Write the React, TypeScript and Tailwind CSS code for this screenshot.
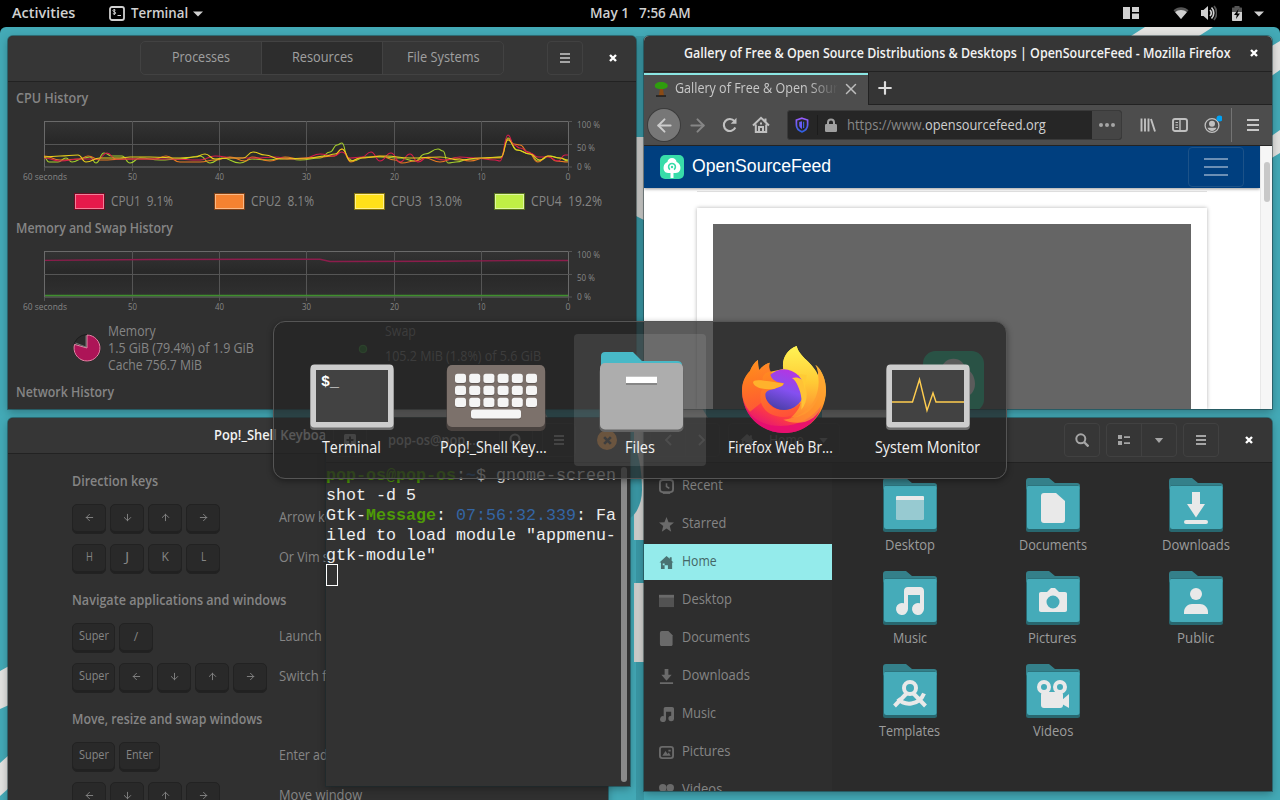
import React, { useLayoutEffect, useRef, useState } from "react";
import { ArrowLeft, ArrowDown, ArrowUp, ArrowRight, X, Plus } from "lucide-react";

/* Text squeezed or stretched horizontally so that it takes exactly `w` pixels. */
function Fit({ w, className = "", children }: { w: number; className?: string; children: React.ReactNode }) {
  const ref = useRef<HTMLSpanElement>(null);
  const [scale, setScale] = useState(1);
  useLayoutEffect(() => {
    if (ref.current) setScale(w / ref.current.offsetWidth);
  }, [w]);
  return (
    <span className={`block shrink-0 whitespace-nowrap ${className}`} style={{ width: w }}>
      <span ref={ref} className="inline-block origin-left" style={{ transform: `translateY(-1px) scaleX(${scale})` }}>
        {children}
      </span>
    </span>
  );
}

type Pt = [number, number];

function smooth(p: Pt[]) {
  let d = `M${p[0][0]} ${p[0][1]}`;
  for (let i = 1; i < p.length; i++) {
    const mx = (p[i - 1][0] + p[i][0]) / 2;
    d += ` C${mx} ${p[i - 1][1]} ${mx} ${p[i][1]} ${p[i][0]} ${p[i][1]}`;
  }
  return d;
}

const green: Pt[] = [[44,157],[49,162],[58,162],[66,158],[72,162],[84,158],[90,157],[96,163],[104,153],[112,156],[122,156],[130,163],[140,158],[160,160],[180,159],[200,156],[210,163],[222,158],[240,163],[252,159],[268,160],[285,158],[300,160],[320,158],[330,152],[337,145],[342,143],[348,158],[353,161],[365,157],[380,157],[400,158],[415,161],[425,154],[438,149],[443,151],[448,163],[456,162],[470,159],[485,158],[501,157],[508,138],[517,150],[530,154],[538,161],[550,156],[560,158],[568,161]];
const yellow: Pt[] = [[44,157],[60,156],[78,155],[86,162],[100,158],[120,158],[130,157],[150,157],[180,158],[195,157],[205,154],[215,159],[230,158],[243,158],[253,152],[265,155],[280,159],[310,158],[325,156],[335,154],[342,149],[351,161],[360,158],[385,156],[410,158],[440,157],[460,160],[480,158],[501,157],[508,140],[517,150],[530,154],[540,160],[548,156],[560,158],[568,160]];
const orange: Pt[] = [[44,156],[60,160],[80,159],[88,156],[100,160],[130,159],[155,159],[166,156],[180,162],[200,162],[215,160],[230,157],[245,161],[252,157],[270,161],[285,157],[300,159],[320,157],[334,156],[342,149],[351,162],[360,158],[380,156],[395,160],[402,163],[415,161],[425,158],[440,162],[455,158],[470,161],[485,158],[501,158],[508,139],[514,144],[520,145],[528,152],[538,162],[548,156],[556,161],[568,162]];
const red: Pt[] = [[44,158],[60,161],[80,159],[98,159],[107,153],[116,159],[140,159],[170,159],[200,160],[215,156],[235,158],[255,158],[275,157],[290,159],[305,158],[320,154],[334,156],[342,152],[350,158],[362,157],[371,152],[380,161],[391,153],[400,162],[410,154],[418,162],[428,157],[445,160],[460,157],[475,158],[495,160],[500,161],[508,135],[514,145],[520,148],[530,153],[538,157],[548,157],[558,161],[565,155],[568,155]];

function ChartFrame({ id, children }: { id: string; children: React.ReactNode }) {
  const ticks: [number, string, number][] = [[132.5, "50", 9], [219.5, "40", 9], [306.5, "30", 9], [394.5, "20", 9], [481.5, "10", 8], [568, "0", 5]];
  return (
    <svg viewBox="8 114 628 72" className="h-[72px] w-[628px] shrink-0">
      <defs>
        <linearGradient id={id} x1="0" y1="0" x2="0" y2="1">
          <stop offset="0" stopColor="#333" />
          <stop offset="0.45" stopColor="#282828" />
          <stop offset="1" stopColor="#303030" />
        </linearGradient>
      </defs>
      <rect x="44.5" y="121.5" width="524" height="45.5" fill={`url(#${id})`} stroke="#6a6a6a" />
      <path d="M44.5 144.5H572M568 121.5h4M568 167h4M44.5 167v4M568.5 167v4M132.5 121v50M219.5 121v50M306.5 121v50M394.5 121v50M481.5 121v50" stroke="#555" fill="none" />
      {children}
      <g fill="#868686" fontSize="9" fontFamily='"Open Sans", sans-serif'>
        <text x="23" y="180" textLength="44" lengthAdjust="spacingAndGlyphs">60 seconds</text>
        {ticks.map(([x, t, w]) => (
          <text key={t} x={x} y="180" textAnchor="middle" textLength={w} lengthAdjust="spacingAndGlyphs">{t}</text>
        ))}
        <text x="577" y="128" textLength="23" lengthAdjust="spacingAndGlyphs">100 %</text>
        <text x="577" y="151" textLength="18" lengthAdjust="spacingAndGlyphs">50 %</text>
        <text x="577" y="170" textLength="14" lengthAdjust="spacingAndGlyphs">0 %</text>
      </g>
    </svg>
  );
}

function MenuBars({ className = "" }: { className?: string }) {
  return (
    <svg viewBox="0 0 10 12" className={`h-3 w-[10px] ${className}`}>
      <path d="M0 2h10M0 6h10M0 10h10" stroke="currentColor" strokeWidth="1.9" />
    </svg>
  );
}

function CloseX({ className = "" }: { className?: string }) {
  return (
    <svg viewBox="0 0 8 8" className={`size-2 ${className}`}>
      <path d="M1 1l6 6M7 1l-6 6" stroke="currentColor" strokeWidth="2.4" />
    </svg>
  );
}

function TopBar() {
  return (
    <header className="flex h-[27px] w-full shrink-0 items-center bg-black pl-3 text-[14px] font-semibold leading-[26px] text-[#d0d0d0]">
      <Fit w={63}>Activities</Fit>
      <svg viewBox="0 0 16 16" className="ml-[34px] size-4 -translate-y-px">
        <rect x="1" y="2" width="14" height="13" rx="2" fill="none" stroke="#d0d0d0" strokeWidth="1.8" />
        <path d="M6.5 5.200c-1-.900-2.600-.600-2.600.400 0 1.400 2.800.900 2.800 2.500 0 1-1.700 1.300-2.900.300M5.300 4v6M8.500 10.500h3.500" fill="none" stroke="#d0d0d0" strokeWidth="1" />
      </svg>
      <Fit w={57} className="ml-[6px]">Terminal</Fit>
      <svg viewBox="0 0 10 6" className="ml-[5px] h-[6px] w-[10px]"><path d="M0 .5h10L5 5.500z" fill="#d0d0d0" /></svg>
      <Fit w={39} className="ml-[387px]">May 1</Fit>
      <Fit w={52} className="ml-[10px]">7:56 AM</Fit>
      <svg viewBox="0 0 16 12" className="ml-[432px] h-3 w-4 -translate-y-px" fill="#d0d0d0"><path d="M0 0h7v12H0zM9 0h7v5H9zM9 6.500h7V12H9z" /></svg>
      <svg viewBox="0 0 16 14" className="ml-[34px] h-[14px] w-4 -translate-y-px">
        <path d="M8 13L.5 4.200C4.500.300 11.500.300 15.500 4.200z" fill="#555" />
        <path d="M8 13L2.200 6.200c3-2.900 8.600-2.900 11.600 0z" fill="#d0d0d0" />
      </svg>
      <svg viewBox="0 0 16 16" className="ml-3 size-4 -translate-y-px" fill="none" strokeWidth="1.700">
        <path d="M0 5h2.500L7 1v14L2.500 11H0z" fill="#d0d0d0" />
        <path d="M9 5c1.500 1.700 1.500 4.300 0 6M10.500 2.500c3 3 3 8 0 11" stroke="#d0d0d0" />
        <path d="M13 1c3.500 4 3.500 10 0 14" stroke="#555" />
      </svg>
      <svg viewBox="0 0 12 16" className="ml-[14px] h-4 w-3 -translate-y-px">
        <path d="M3.500 1h5v1.500H10c.8 0 1 .4 1 1V7H1V3.500c0-.6.200-1 1-1h1.500z" fill="#555" />
        <path d="M1 7h10v8c0 .600-.300 1-1 1H2c-.7 0-1-.4-1-1z" fill="#d0d0d0" />
        <path d="M7.500 4L3 10h2.700L5 14l4-5.500H6.400z" fill="#000" />
      </svg>
      <svg viewBox="0 0 10 6" className="ml-[11px] h-[6px] w-[10px]"><path d="M0 .5h10L5 5.500z" fill="#d0d0d0" /></svg>
    </header>
  );
}

function Wallpaper() {
  return (
    <svg viewBox="0 0 1280 773" className="absolute inset-0 h-[773px] w-[1280px]">
      <rect width="1280" height="773" fill="#000" />
      <rect width="1280" height="790" rx="6" fill="#43a9b6" />
      <g transform="translate(0 -27)">
        <rect x="636" y="36" width="8" height="764" fill="#3a98a5" />
        <g fill="#e2e2e0">
          <path d="M1145 27h68l-14 9h-68zM1270 47l10-6v29l-10 7zM1270 137l10-7v23l-10 6z" />
          <path d="M0 671l9-5v39l-9 4zM0 763l9-8v33l-9 8z" />
          <path d="M388 408h154l6 10H394zM636 408h66l6 10h-72zM822 408h110v10H822z" />
        </g>
        <g fill="#cfcfcd">
          <path d="M634 137h12v84l-12-6zM634 418h12v122h-12zM634 583h12v79h-12z" />
        </g>
        <path d="M630 440c7 3 12 28 12 50 0 12-5 24-12 28z" fill="#3a98a5" />
      </g>
    </svg>
  );
}

const winCls = "absolute flex flex-col overflow-hidden shadow-[0_0_0_1px_rgba(25,45,48,0.45),0_3px_8px_rgba(0,0,0,0.3)]";
const headCls = "flex shrink-0 items-center border-b border-[#222] bg-[#363636]";
const btnCls = "flex items-center justify-center rounded-[4px] border border-[#414141] text-[#a5a5a5]";

function Legend({ border, fill, inner, label, value, w, className }: { border: string; fill: string; inner: string; label: string; value: string; w: number; className: string }) {
  return (
    <div className={`flex items-center ${className}`}>
      <svg viewBox="0 0 31 17" className="h-[17px] w-[31px]">
        <rect x=".5" y=".5" width="30" height="16" fill={fill} stroke={border} />
        <rect x="1.500" y="1.500" width="28" height="14" fill="none" stroke={inner} />
      </svg>
      <Fit w={w} className="ml-[6px]">{label}&nbsp; {value}</Fit>
    </div>
  );
}

function SystemMonitor() {
  return (
    <section className={`${winCls} left-[8px] top-[9px] h-[373px] w-[628px] rounded-t-[5px] bg-[#303030] text-[14px] text-[#858585]`}>
      <div className={`${headCls} h-[46px] text-[#a0a0a0]`}>
        <div className="ml-[132px] flex h-[34px] w-[364px] -translate-y-[1px] overflow-hidden rounded-[5px] border border-[#424242]">
          <div className="flex flex-1 items-center justify-center"><Fit w={58}>Processes</Fit></div>
          <div className="flex flex-1 items-center justify-center border-x border-[#424242] bg-[#2d2d2d]"><Fit w={61}>Resources</Fit></div>
          <div className="flex flex-1 items-center justify-center"><Fit w={73}>File Systems</Fit></div>
        </div>
        <div className={`${btnCls} ml-[43px] h-[34px] w-9 -translate-y-[1px]`}><MenuBars /></div>
        <CloseX className="ml-[26px] -translate-y-[1px] text-white" />
      </div>
      <div className="flex h-8 shrink-0 items-center pl-2 font-semibold"><Fit w={72}>CPU History</Fit></div>
      <ChartFrame id="cpu">
        <g fill="none" strokeWidth="1.100">
          <path d={smooth(green)} stroke="#a5cf2c" />
          <path d={smooth(orange)} stroke="#e87a22" />
          <path d={smooth(red)} stroke="#d81b4c" />
          <path d={smooth(yellow)} stroke="#e8cf1b" />
        </g>
      </ChartFrame>
      <div className="flex h-[30px] shrink-0 items-center">
        <Legend className="ml-[65.500px] w-[140px]" border="#6d0c23" fill="#e6194b" inner="#f07f99" label="CPU1" value="9.1%" w={62} />
        <Legend className="w-[140px]" border="#7a4018" fill="#f58231" inner="#f9b988" label="CPU2" value="8.1%" w={63} />
        <Legend className="w-[140px]" border="#80700d" fill="#ffe119" inner="#fff08e" label="CPU3" value="13.0%" w={71} />
        <Legend className="w-[140px]" border="#56701f" fill="#bfef45" inner="#dff7a2" label="CPU4" value="19.2%" w={71} />
      </div>
      <div className="flex h-7 shrink-0 items-center pb-1 pl-2 font-semibold"><Fit w={157}>Memory and Swap History</Fit></div>
      <ChartFrame id="mem">
        <path d="M45 130.400L150 129.500L320 129.200L330 131.500L440 131.300L520 130.500H568" fill="none" stroke="#8c1d4c" strokeWidth="1.400" />
        <path d="M45 165.500H568" stroke="#3f8f2e" strokeWidth="1.500" />
      </ChartFrame>
      <div className="flex h-16 shrink-0 items-start pl-[64px] pt-[7px] leading-[17px]">
        <svg viewBox="-15 -15 30 30" className="mt-[10px] size-[30px]">
          <circle r="13.500" fill="#2a2a2a" stroke="#1c1c1c" />
          <path d="M0 0V-13A13 13 0 1 1-12.500-3.600z" fill="#ad1457" stroke="#e58aa8" strokeWidth="1" />
          <path d="M-1-1V-12.500M-1-1L-11.500-5" stroke="#888" strokeWidth=".8" />
        </svg>
        <div className="ml-[6px]">
          <Fit w={48}>Memory</Fit>
          <Fit w={146}>1.5 GiB (79.4%) of 1.9 GiB</Fit>
          <Fit w={94}>Cache 756.7 MiB</Fit>
        </div>
        <svg viewBox="0 0 10 10" className="ml-[104px] mt-[21px] size-[10px]"><circle cx="5" cy="5" r="3.800" fill="#2f7d32" stroke="#4aa04a" /></svg>
        <div className="ml-[17px] flex flex-col gap-2">
          <Fit w={31}>Swap</Fit>
          <Fit w={156}>105.2 MiB (1.8%) of 5.6 GiB</Fit>
        </div>
      </div>
      <div className="flex h-6 shrink-0 items-center pl-2 font-semibold"><Fit w={98}>Network History</Fit></div>
    </section>
  );
}

function SiteLogo({ className }: { className: string }) {
  return (
    <svg viewBox="0 0 24 24" className={className}>
      <rect width="24" height="24" rx="5" fill="#38dca9" />
      <path d="M12 3c2.600 0 4.400 1.700 4.600 4 2 .6 3.300 2.300 3.700 4.500.7 3.600-1.200 6.500-4.400 6.500h-2.400v5h-3v-5H8.100c-3.200 0-5.100-2.900-4.400-6.500C4.100 9.300 5.400 7.600 7.400 7 7.600 4.700 9.400 3 12 3z" fill="#fff" />
      <path d="M10 14.600a3.400 3.400 0 1 1 4 0" fill="none" stroke="#38dca9" strokeWidth="1.600" />
      <circle cx="12" cy="12" r="1.200" fill="#38dca9" />
    </svg>
  );
}

function Firefox() {
  return (
    <section className={`${winCls} left-[644px] top-[9px] h-[373px] w-[628px] rounded-t-[5px] bg-white text-[14px]`}>
      <div className={`${headCls} h-[36px] font-semibold text-[#f2f2f2]`}>
        <Fit w={547} className="ml-10">Gallery of Free &amp; Open Source Distributions &amp; Desktops | OpenSourceFeed - Mozilla Firefox</Fit>
        <CloseX className="ml-[19px] -translate-y-px text-white" />
      </div>
      <div className="flex h-[33px] shrink-0 bg-[#353535]">
        <div className="mt-px flex w-[224px] items-center border-t-2 border-[#8be6e3] bg-[#4d4d4d] pb-[3px] pl-[9px] text-[#c8c8c8]">
          <svg viewBox="0 0 16 16" className="size-4">
            <path d="M7 7h3l.8 7 1.500 1H4l2-1z" fill="#8a4a14" />
            <path d="M2 6c-1-3 2-5 6-5s8 2 6.500 5c-1 2.500-11 3-12.500 0z" fill="#2f9d0e" />
            <path d="M3 15h10" stroke="#1c1c1c" strokeWidth="1.300" />
          </svg>
          <div className="ml-[6px] w-[163px] overflow-hidden [mask-image:linear-gradient(to_right,#000_82%,transparent)]">
            <Fit w={163}>Gallery of Free &amp; Open Sour</Fit>
          </div>
          <X className="ml-1 size-[18px] text-[#bdbdbd]" strokeWidth={2} />
        </div>
        <div className="flex flex-1 items-center border-b border-l border-[#222] pl-[6px]"><Plus className="size-[20px] text-[#ddd]" strokeWidth={2.600} /></div>
      </div>
      <div className="flex h-[41px] shrink-0 items-center border-b border-[#262626] bg-[#4d4d4d] pl-1">
        <div className="flex size-8 items-center justify-center rounded-full bg-[#777] shadow-[0_0_0_1px_#3c3c3c]"><ArrowLeft className="size-[21px] text-[#ccc]" strokeWidth={2.300} /></div>
        <ArrowRight className="ml-[7px] size-[21px] text-[#868686]" strokeWidth={2.300} />
        <svg viewBox="0 0 16 16" className="ml-[14px] size-4" fill="none" stroke="#c0c0c0" strokeWidth="2.100">
          <path d="M13.300 10.500A6 6 0 1 1 12.500 4.200" /><path d="M14.500.8v6H8.700z" fill="#c0c0c0" stroke="none" />
        </svg>
        <svg viewBox="0 0 18 18" className="ml-[14px] size-[18px]" fill="none" stroke="#c0c0c0" strokeWidth="2">
          <path d="M1 9.500l8-7.700 8 7.700M3.800 8.500V16h10.400V8.500M13.500 2.500v3" /><path d="M7 16v-5h4v5" /><path d="M9 6.500v2" />
        </svg>
        <div className="ml-[17px] flex h-[30px] w-[335px] items-center overflow-hidden rounded-[3px] border border-[#3a3a3a] bg-[#262626]">
          <svg viewBox="0 0 16 16" className="ml-[6px] size-4" fill="none">
            <defs><linearGradient id="shield" x1="0" y1="0" x2="0" y2="1"><stop offset="0" stopColor="#9a5cff" /><stop offset="1" stopColor="#2c5fe0" /></linearGradient></defs>
            <path d="M8 1.200L13.600 3v5c0 3.300-2.200 5.600-5.600 6.900C4.600 13.600 2.400 11.300 2.400 8V3z" stroke="url(#shield)" strokeWidth="1.700" />
            <path d="M8 4.200l-2.800.8v3c0 1.700 1 3 2.800 3.900z" fill="#6a5cf5" />
            <path d="M9.600 4.700v6.200" stroke="#3c5ce0" strokeWidth="1.200" />
          </svg>
          <div className="ml-[7px] h-5 w-px bg-[#1c1c1c]" />
          <svg viewBox="0 0 12 14" className="ml-[7px] h-[14px] w-3"><path d="M3 7V4.500a3 3 0 0 1 6 0V7" fill="none" stroke="#a0a0a0" strokeWidth="2" /><rect y="6" width="12" height="8" rx="1.300" fill="#a0a0a0" /></svg>
          <Fit w={78} className="ml-[10px] text-[#888]">https://www.</Fit>
          <Fit w={121} className="text-[#cfcfcf]">opensourcefeed.org</Fit>
          <div className="ml-auto flex h-full w-[29px] items-center justify-center gap-[2px] bg-[#454545]">
            <i className="size-1 rounded-full bg-[#a5a5a5]" /><i className="size-1 rounded-full bg-[#a5a5a5]" /><i className="size-1 rounded-full bg-[#a5a5a5]" />
          </div>
        </div>
        <svg viewBox="0 0 16 16" className="ml-[18px] size-4" stroke="#c0c0c0" strokeWidth="1.900" fill="none"><path d="M1.500 1.500v13M5 1.500v13M8.500 1.500v13M11 2l4 12.500" /></svg>
        <svg viewBox="0 0 16 16" className="ml-4 size-4" stroke="#c0c0c0" fill="none"><rect x="1" y="2" width="14" height="12" rx="2" strokeWidth="1.900" /><path d="M8 2v12" strokeWidth="1.400" /><path d="M3.500 5.500h2.500M3.500 8h2.500M3.500 10.500h2.500" strokeWidth="1.100" /></svg>
        <svg viewBox="0 0 20 20" className="ml-[14px] size-[20px]" fill="none">
          <circle cx="10" cy="10.500" r="6.900" stroke="#c0c0c0" strokeWidth="1.300" />
          <circle cx="10" cy="8.800" r="3" fill="#c0c0c0" /><path d="M5.500 12.800h9c-.7 2-2.500 3.200-4.500 3.200s-3.800-1.200-4.500-3.200z" fill="#c0c0c0" />
          <circle cx="17.500" cy="3.500" r="3" fill="#00a2f4" />
        </svg>
        <div className="ml-[9px] h-[34px] w-px bg-[#747474]" />
        <svg viewBox="0 0 12 12" className="ml-[15px] size-3"><path d="M0 1h12M0 6h12M0 11h12" stroke="#c8c8c8" strokeWidth="1.900" /></svg>
      </div>
      <div className="flex min-h-0 flex-1">
        <div className="flex min-h-0 flex-1 flex-col">
          <div className="flex h-[42px] shrink-0 items-center bg-[#003f7f] pl-4 pr-4 shadow-[0_1px_3px_rgba(0,0,0,0.4)]">
            <SiteLogo className="size-6" />
            <Fit w={139} className="ml-2 pt-px font-['Liberation_Sans',sans-serif] text-[18px] text-white">OpenSourceFeed</Fit>
            <div className="ml-auto flex h-10 w-14 items-center justify-center rounded-[4px] border border-[#1c5288]">
              <svg viewBox="0 0 24 18" className="h-[18px] w-6"><path d="M0 1h24M0 9h24M0 17h24" stroke="#8fabc8" strokeWidth="1.700" /></svg>
            </div>
          </div>
          <div className="mx-[53px] mt-[3px] h-px shrink-0 bg-[#ddd]" />
          <div className="mx-[53px] mt-4 min-h-0 flex-1 px-4 pt-4 shadow-[0_0_4px_rgba(0,0,0,0.3)]">
            <div className="flex h-full justify-end bg-[#656565] pr-[207px] pt-[127px]"><SiteLogo className="size-[61px] shrink-0" /></div>
          </div>
        </div>
        <div className="flex w-3 justify-center border-l border-[#e8e8e8] bg-[#f6f6f6] pt-4"><div className="h-10 w-[6px] rounded-full bg-[#c8c8c8]" /></div>
      </div>
    </section>
  );
}

function Key({ children, wide = "w-[34px]" }: { children: React.ReactNode; wide?: string }) {
  return (
    <div className={`flex h-[30px] items-center justify-center rounded-[5px] border border-[#222] bg-[#292929] pb-[3px] text-[12px] shadow-[inset_0_-2px_0_#212121] ${wide}`}>
      {children}
    </div>
  );
}
const arrowCls = "size-[11px]";
const Arrows = () => (
  <>
    <Key><ArrowLeft className={arrowCls} /></Key>
    <Key><ArrowDown className={arrowCls} /></Key>
    <Key><ArrowUp className={arrowCls} /></Key>
    <Key><ArrowRight className={arrowCls} /></Key>
  </>
);
const SuperKey = () => <Key wide="w-[43px]"><Fit w={30}>Super</Fit></Key>;

function Row({ children, label, w }: { children: React.ReactNode; label: string; w: number }) {
  return (
    <div className="mb-[10px] flex h-[30px] shrink-0 items-center">
      <div className="flex w-[207px] shrink-0 gap-1">{children}</div>
      <Fit w={w} className="pb-[3px]">{label}</Fit>
    </div>
  );
}

function Shortcuts() {
  return (
    <section className={`${winCls} left-[8px] top-[391px] h-[400px] w-[600px] rounded-t-[5px] bg-[#303030] text-[14px] text-[#858585]`}>
      <div className={`${headCls} h-[36px] font-semibold text-[#f2f2f2]`}><Fit w={189} className="ml-[206px]">Pop!_Shell Keyboard Shortcuts</Fit></div>
      <div className="flex flex-col pl-16 pt-[18px]">
        <Fit w={86} className="mb-[12px] leading-5 font-semibold">Direction keys</Fit>
        <Row label="Arrow keys" w={65}><Arrows /></Row>
        <Row label="Or Vim shortcuts" w={99}><Key><Fit w={7}>H</Fit></Key><Key><Fit w={4}>J</Fit></Key><Key><Fit w={7}>K</Fit></Key><Key><Fit w={5}>L</Fit></Key></Row>
        <Fit w={214} className="mb-[12px] mt-[7px] leading-5 font-semibold">Navigate applications and windows</Fit>
        <Row label="Launch" w={43}><SuperKey /><Key>/</Key></Row>
        <Row label="Switch focus" w={76}><SuperKey /><Arrows /></Row>
        <Fit w={190} className="mb-[12px] mt-[7px] leading-5 font-semibold">Move, resize and swap windows</Fit>
        <Row label="Enter adjustment mode" w={137}><SuperKey /><Key wide="w-[41px]"><Fit w={27}>Enter</Fit></Key></Row>
        <Row label="Move window" w={83}><Arrows /></Row>
      </div>
    </section>
  );
}

function Terminal() {
  return (
    <section className={`${winCls} left-[326px] top-[391px] h-[368px] w-[304px] bg-[#323232]`}>
      <div className={`${headCls} h-[45px] pl-[7px]`}>
        <div className={`${btnCls} h-[34px] w-[34px]`}>
          <svg viewBox="0 0 12 12" className="size-3"><rect width="12" height="12" rx="1.500" fill="currentColor" /><path d="M6 2.500v7M2.500 6h7" stroke="#363636" strokeWidth="2" /></svg>
        </div>
        <Fit w={88} className="ml-[21px] text-[14px] font-semibold text-[#aaa]">pop-os@pop…</Fit>
        <div className={`${btnCls} ml-[23px] h-[34px] w-[34px]`}>
          <svg viewBox="0 0 14 14" className="size-[14px]" fill="none" stroke="currentColor" strokeWidth="2"><circle cx="6" cy="6" r="4.500" /><path d="M9.500 9.500L13 13" /></svg>
        </div>
        <div className={`${btnCls} ml-[9px] h-[34px] w-[34px]`}><MenuBars /></div>
        <div className="ml-[21px] flex size-5 items-center justify-center rounded-full bg-[#ff9a3c] text-[#363636]"><CloseX className="size-[9px]" /></div>
      </div>
      <div className="flex flex-1">
        <div className="w-[295px] pt-[3px] font-['Liberation_Mono',monospace] text-[16.660px] leading-5 text-[#eee]">
          <p className="whitespace-pre"><b className="text-[#4e9a06]">pop-os@pop-os</b>:<b className="text-[#3465a4]">~</b>$ gnome-screen</p>
          <p className="whitespace-pre">shot -d 5</p>
          <p className="whitespace-pre">Gtk-<b className="text-[#4e9a06]">Message</b>: <span className="text-[#3465a4]">07:56:32.339</span>: Fa</p>
          <p className="whitespace-pre">iled to load module "appmenu-</p>
          <p className="whitespace-pre">gtk-module"</p>
          <div className="-mt-[2px] h-[22px] w-3 border border-white" />
        </div>
        <div className="my-1 w-[6px] rounded-full bg-[#8a8a8a]" />
      </div>
    </section>
  );
}

const side: { name: string; w: number; icon: React.ReactNode }[] = [
  { name: "Recent", w: 41, icon: <><rect x="1" y="1" width="14" height="13" rx="3" fill="none" stroke="currentColor" strokeWidth="2" /><path d="M8 4.500V8l3 2" fill="none" stroke="currentColor" strokeWidth="1.700" /><path d="M4 15.500h8" stroke="currentColor" /></> },
  { name: "Starred", w: 44, icon: <path d="M8 0l2.200 5.500 5.800.4-4.500 3.800 1.500 5.900L8 12.300l-5 3.300 1.500-5.900L0 5.900l5.800-.4z" /> },
  { name: "Home", w: 35, icon: <path fillRule="evenodd" d="M8 1L.500 8h1.600v7H6v-4h3.500v4H14V8h1.500l-2-2V2.500h-2V4zM4 9h2v2H4z" /> },
  { name: "Desktop", w: 50, icon: <><path d="M0 2h16v13H0z" opacity=".6" /><path d="M0 2h16v3H0z" /></> },
  { name: "Documents", w: 68, icon: <path d="M3 0h7l4.500 4.500V14c0 1-.5 2-2 2H3c-1 0-2-.7-2-2V2c0-1 .8-2 2-2z" /> },
  { name: "Downloads", w: 68, icon: <path d="M6 0h4v6h3.500L8 12.500 2.500 6H6zM1 14h14v2H1z" /> },
  { name: "Music", w: 34, icon: <path d="M5 2c0-1.200.7-2 2-2h7c1.200 0 2 .8 2 2v10a3 3 0 1 1-3-2.800V5H7.500v8A3.200 3.200 0 1 1 5 9.800z" /> },
  { name: "Pictures", w: 49, icon: <><rect x="1" y="2" width="14" height="12" rx="2.500" fill="none" stroke="currentColor" strokeWidth="2" /><path d="M3.500 11.500L7 6.500l2 3 1.500-1.500 2 3.500zM10 5h2.500v2H10z" /></> },
  { name: "Videos", w: 40, icon: <><circle cx="4" cy="5" r="4" /><circle cx="12" cy="5" r="4" /><rect x="2" y="8" width="10" height="8" rx="2" /></> },
];

const folders: { name: string; w: number; icon: React.ReactNode }[] = [
  { name: "Desktop", w: 50, icon: <><rect x="13" y="18" width="28" height="24" rx="1.500" opacity=".5" /><path d="M13 22v-2.500c0-1 .5-1.500 1.500-1.500h25c1 0 1.500.5 1.500 1.500V22z" /></> },
  { name: "Documents", w: 68, icon: <path d="M18 15h12l9 8v19c0 2-1 3-3 3H18c-2 0-3-1-3-3V18c0-2 1-3 3-3z" /> },
  { name: "Downloads", w: 68, icon: <><path d="M23 14h8v12h5l-9 13.500L18 26h5z" /><rect x="15" y="42" width="24" height="4" rx="2" /></> },
  { name: "Music", w: 34, icon: <path d="M21 20c0-2.500 1.500-4 4-4h12c2.500 0 4 1.500 4 4v18a6 6 0 1 1-4-5.700V24H25v14a6 6 0 1 1-4-5.700z" /> },
  { name: "Pictures", w: 49, icon: <path fillRule="evenodd" d="M15 21h6l4-4h4l4 4h6c1.300 0 2 .7 2 2v16c0 1.300-.7 2-2 2H15c-1.300 0-2-.7-2-2V23c0-1.300.7-2 2-2zM27 24.500a6.500 6.500 0 1 0 0 13 6.500 6.500 0 1 0 0-13z" /> },
  { name: "Public", w: 37, icon: <><circle cx="27" cy="23" r="6" /><path d="M15 43v-2c0-4.500 4-8 8-8h8c4 0 8 3.500 8 8v2z" /></> },
  { name: "Templates", w: 61, icon: <g fill="none" stroke="#e9e9e9" strokeWidth="4"><circle cx="27" cy="24" r="6" /><path d="M24 29L11.500 42M30 29L42.500 42M15 34.500c6 7.500 21 7.500 26-5" /></g> },
  { name: "Videos", w: 40, icon: <><g fill="none" stroke="#e9e9e9" strokeWidth="4"><circle cx="18" cy="23" r="5" /><circle cx="34" cy="23" r="5" /></g><rect x="15" y="28" width="22" height="16" rx="3" /><path d="M36 36l7-6v14l-7-4z" /></> },
];

function FilesWindow() {
  return (
    <section className={`${winCls} left-[644px] top-[391px] h-[373px] w-[628px] rounded-t-[5px] bg-[#2b2b2b] text-[14px]`}>
      <div className={`${headCls} h-[45px] pl-[6px]`}>
        <div className="flex h-[34px] w-[70px] overflow-hidden rounded-[4px] border border-[#3c3c3c] text-[#777]">
          <div className="flex flex-1 items-center justify-center border-r border-[#3c3c3c]"><svg viewBox="0 0 8 12" className="h-3 w-2"><path d="M7 1L2 6l5 5" fill="none" stroke="currentColor" strokeWidth="2" /></svg></div>
          <div className="flex flex-1 items-center justify-center"><svg viewBox="0 0 8 12" className="h-3 w-2"><path d="M1 1l5 5-5 5" fill="none" stroke="currentColor" strokeWidth="2" /></svg></div>
        </div>
        <div className="ml-2 flex h-[34px] w-[112px] items-center justify-center gap-[15px] rounded-[4px] border border-[#3c3c3c] text-[#777]">
          <svg viewBox="0 0 16 16" className="size-[14px]" fill="currentColor">{side[2].icon}</svg>
          <Fit w={35}>Home</Fit>
          <svg viewBox="0 0 10 6" className="h-[5px] w-[9px]"><path d="M0 0h10L5 6z" fill="currentColor" /></svg>
        </div>
        <div className={`${btnCls} ml-auto h-[34px] w-[36px]`}>
          <svg viewBox="0 0 14 14" className="size-[14px]" fill="none" stroke="currentColor" strokeWidth="2"><circle cx="5.800" cy="5.800" r="4.500" /><path d="M9 9l4.500 4.500" strokeWidth="2.400" /></svg>
        </div>
        <div className="ml-[6px] flex h-[34px] w-[71px] rounded-[4px] border border-[#414141] text-[#a5a5a5]">
          <div className="flex flex-1 items-center justify-center border-r border-[#414141]">
            <svg viewBox="0 0 12 10" className="h-[10px] w-3"><path d="M0 0h4v4H0zM0 6h4v4H0zM6 1.200h6v1.800H6zM6 7.200h6V9H6z" fill="currentColor" /></svg>
          </div>
          <div className="flex flex-1 items-center justify-center"><svg viewBox="0 0 10 6" className="h-[5px] w-[10px]"><path d="M0 0h10L5 6z" fill="currentColor" /></svg></div>
        </div>
        <div className={`${btnCls} ml-[6px] h-[34px] w-[36px]`}><MenuBars /></div>
        <CloseX className="ml-[26px] mr-[19px] text-white" />
      </div>
      <div className="flex min-h-0 flex-1">
        <div className="flex w-[188px] shrink-0 flex-col gap-[2px] overflow-hidden bg-[#2e2e2e] pt-[5px]">
          {side.map((s) => (
            <div key={s.name} className={`flex h-9 shrink-0 items-center pl-[15px] ${s.name === "Home" ? "bg-[#94ebeb] text-[#4a7373]" : "text-[#6a6a6a]"}`}>
              <svg viewBox="0 0 16 16" className="size-[15px]" fill="currentColor">{s.icon}</svg>
              <Fit w={s.w} className={s.name === "Home" ? "ml-2 pb-px text-[#466]" : "ml-2 pb-px text-[#858585]"}>{s.name}</Fit>
            </div>
          ))}
        </div>
        <div className="ml-[6px] grid h-[279px] w-[429px] grid-cols-3 pt-[15px]">
          {folders.map((f) => (
            <div key={f.name} className="flex h-[93px] flex-col items-center">
              <svg viewBox="0 0 54 54" className="size-[54px] shrink-0">
                <path d="M0 3c0-2 1-3 3-3h20l6 5h22c2 0 3 1 3 3v20H0z" fill="#34808a" />
                <rect y="10" width="54" height="44" rx="2.500" fill="#28676f" />
                <rect x="1" y="7.500" width="52.500" height="43.500" rx="2.500" fill="#45abb9" />
                <path d="M2 7.500h50" stroke="#2a6b74" strokeWidth=".8" />
                <g fill="#e9e9e9">{f.icon}</g>
              </svg>
              <Fit w={f.w} className="mt-1 leading-5 text-[#9c9c9c]">{f.name}</Fit>
            </div>
          ))}
        </div>
      </div>
    </section>
  );
}

function ScreenIcon({ children }: { children: React.ReactNode }) {
  return (
    <>
      <rect x="24" y="33" width="84" height="63" rx="4" fill="#6d6d6d" />
      <rect x="24.500" y="30.500" width="83" height="63" rx="4" fill="#cdcdcd" />
      <rect x="30" y="36" width="72" height="52" fill="#424242" />
      {children}
    </>
  );
}

function FirefoxLogo() {
  return (
    <g transform="translate(-78 -19) scale(.33333)">
      <defs>
        <linearGradient id="ffBody" x1="0.75" y1="0.1" x2="0.35" y2="1">
          <stop offset="0" stopColor="#fff04a" /><stop offset=".28" stopColor="#ffc22e" /><stop offset=".5" stopColor="#ff8a1f" /><stop offset=".75" stopColor="#ff3f3f" /><stop offset="1" stopColor="#e3107a" />
        </linearGradient>
        <linearGradient id="ffFlame" x1=".5" y1="0" x2=".5" y2="1">
          <stop offset="0" stopColor="#fff455" /><stop offset=".5" stopColor="#ffcb35" /><stop offset="1" stopColor="#ff8630" />
        </linearGradient>
        <linearGradient id="ffGlobe" x1=".7" y1="0" x2=".35" y2="1">
          <stop offset="0" stopColor="#b833e1" /><stop offset=".5" stopColor="#8450f0" /><stop offset="1" stopColor="#4a3fa8" />
        </linearGradient>
        <linearGradient id="ffHead" x1="0" y1="0" x2="1" y2="1">
          <stop offset="0" stopColor="#ff8a16" /><stop offset="1" stopColor="#ff5a35" />
        </linearGradient>
        <linearGradient id="ffJaw" x1=".3" y1="0" x2=".6" y2="1">
          <stop offset="0" stopColor="#ff8a20" /><stop offset="1" stopColor="#ff5238" />
        </linearGradient>
      </defs>
      <path d="M306 228C306 204 314 184 330 168C335 154 343 142 354 135C354 148 355 158 358 165C366 155 376 147 389 143C386 154 387 163 391 170L430 162C424 132 442 102 470 93C474 112 490 126 506 142C518 155 528 166 534 180C535 168 532 158 526 149C548 166 558 198 558 228C556 300 502 354 432 354C362 354 306 298 306 228z" fill="url(#ffBody)" />
      <path d="M310 258C326 312 372 334 424 333C480 331 520 306 545 270C530 324 486 354 432 354C372 354 322 314 310 258z" fill="#e60d70" opacity=".9" />
      <path d="M306 228C306 204 314 184 330 168C335 154 343 142 354 135C354 148 355 158 358 165C366 155 376 147 389 143C386 154 388 165 398 178L380 250L330 290C314 272 306 250 306 228z" fill="url(#ffHead)" opacity=".75" />
      <path d="M430 162C424 132 442 102 470 93C474 112 490 126 506 142C544 178 550 232 524 268C508 294 486 306 452 308C478 290 492 250 470 180z" fill="url(#ffFlame)" />
      <path d="M526 149C548 166 558 198 558 228C556 262 542 290 520 308C490 330 452 324 430 314C510 306 545 240 534 180C535 168 532 158 526 149z" fill="#ff9a30" opacity=".75" />
      <circle cx="432" cy="224" r="61" fill="url(#ffGlobe)" />
      <path d="M456 189C466 186 476 187 483 192C506 212 506 260 484 284C486 262 486 240 474 214C470 204 464 194 456 189z" fill="#ffc236" />
      <path d="M470 176C486 186 492 206 494 224L500 180z" fill="#ffcb35" />
      <path d="M340 205C336 196 350 192 368 196C366 182 374 172 391 170C389 183 396 194 410 200L431 205C430 215 416 216 404 221C392 225 376 225 376 240C376 262 398 286 430 286C454 286 472 276 482 262C478 290 456 306 430 306C394 306 366 286 362 256C360 240 362 228 368 222C356 220 344 216 340 205z" fill="url(#ffJaw)" />
      <path d="M340 205C336 196 350 194 372 197C394 198 412 204 431 205C430 215 416 216 404 221C380 225 348 222 340 205z" fill="#ffb22c" />
    </g>
  );
}

const apps: { name: string; w: number; icon: React.ReactNode; shift?: string }[] = [
  { name: "Terminal", w: 59, shift: "-translate-x-px", icon: <ScreenIcon><text x="35" y="52" fill="#fff" fontSize="15" fontFamily='"Liberation Mono", monospace' fontWeight="bold">$_</text></ScreenIcon> },
  { name: "Pop!_Shell Key...", w: 107, shift: "-translate-x-[3px]", icon: (
    <>
      <rect x="16.500" y="33" width="99" height="64" rx="5" fill="#4a4340" />
      <rect x="17" y="31" width="98" height="62" rx="5" fill="#7c716b" />
      {[0, 1, 2].flatMap((r) => [0, 1, 2, 3, 4, 5].map((c) => (
        <g key={`${r}${c}`}>
          <rect x={25 + c * 14.200} y={40.500 + r * 12} width="11" height="9.500" rx="2.500" fill="#5f5652" />
          <rect x={25 + c * 14.200} y={39.700 + r * 12} width="11" height="9.300" rx="2.500" fill="#f5f5f5" />
        </g>
      )))}
      <rect x="41" y="76" width="50" height="9.500" rx="2.500" fill="#5f5652" />
      <rect x="41" y="75.500" width="50" height="9" rx="2.500" fill="#f5f5f5" />
    </>
  ) },
  { name: "Files", w: 30, icon: (
    <>
      <path d="M27 40V22c0-2.500 1.500-4 4-4h28l9 9h35c3 0 5 1.500 5 4v9z" fill="#48b9c7" />
      <rect x="25.500" y="33" width="84" height="65" rx="5" fill="#636363" />
      <rect x="26" y="29" width="83" height="66.500" rx="5" fill="#adadad" />
      <rect x="52" y="42" width="31" height="9" fill="#868686" />
      <rect x="52" y="42.500" width="31" height="6.500" fill="#fff" />
    </>
  ) },
  { name: "Firefox Web Br...", w: 105, shift: "-translate-x-1", icon: <FirefoxLogo /> },
  { name: "System Monitor", w: 105, shift: "-translate-x-px", icon: <ScreenIcon><path d="M30 68h20.500L57.500 45.500 65 76.500 71 59l3 9h28" fill="none" stroke="#ffcd4f" strokeWidth="1.400" /></ScreenIcon> },
];

function Switcher() {
  return (
    <div className="absolute left-[273px] top-[294px] flex h-[158px] w-[734px] gap-3 rounded-[12px] border border-[#555] bg-[#242424]/75 p-3 shadow-[0_2px_6px_rgba(0,0,0,0.4)]">
      {apps.map((a) => (
        <div key={a.name} className={`flex h-[132px] w-[132px] shrink-0 flex-col items-center rounded-[4px] ${a.name === "Files" ? "bg-white/10" : ""}`}>
          <svg viewBox="0 0 132 102" className="h-[102px] w-[132px] shrink-0">{a.icon}</svg>
          <Fit w={a.w} className={`text-[15.500px] leading-[24px] text-[#f2f2f2] ${a.shift ?? ""}`}>{a.name}</Fit>
        </div>
      ))}
    </div>
  );
}

export default function App() {
  return (
    <div className="flex h-[800px] w-[1280px] flex-col overflow-hidden bg-black font-['Open_Sans','Noto_Sans',sans-serif]">
      <TopBar />
      <main className="relative h-[773px] overflow-hidden">
        <Wallpaper />
        <SystemMonitor />
        <Firefox />
        <Shortcuts />
        <FilesWindow />
        <Terminal />
        <Switcher />
      </main>
    </div>
  );
}
